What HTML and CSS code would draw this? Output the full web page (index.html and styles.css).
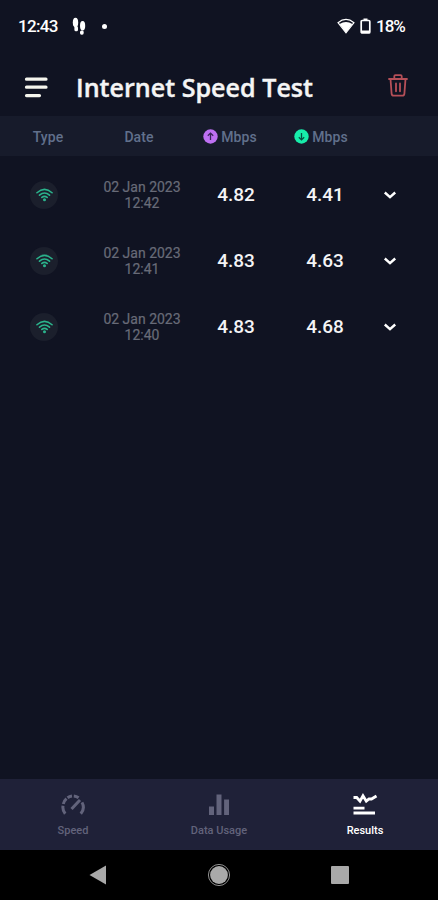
FILE: index.html
```html
<!DOCTYPE html>
<html lang="en">
<head>
    <meta charset="UTF-8">
    <meta name="viewport" content="width=device-width, initial-scale=1.0">
    <title>Internet Speed Test</title>
    <link rel="stylesheet" href="styles.css">
</head>
<body>
    <svg class="defs" width="0" height="0">
        <symbol id="wifi" viewBox="0 0 18 14">
            <path d="M1 4.6Q9-2.4 17 4.6M3.7 7.2Q9 2.6 14.3 7.2M6.2 9.6Q9 7.2 11.8 9.6" fill="none" stroke="currentColor" stroke-width="1.7" stroke-linecap="round"/>
            <circle cx="9" cy="12" r="1.6" fill="currentColor"/>
        </symbol>
        <symbol id="chevron" viewBox="0 0 14 10">
            <path d="M1.8 2.5L7 7.2L12.2 2.5" fill="none" stroke="currentColor" stroke-width="2.4"/>
        </symbol>
    </svg>

    <div class="status-bar">
        <span class="time">12:43</span>
        <svg class="steps" width="14" height="19" viewBox="0 0 14 19">
            <ellipse cx="3.5" cy="5.5" rx="2.7" ry="4.7"/>
            <rect x="2.4" y="9" width="3.6" height="5.3" rx="1.5"/>
            <ellipse cx="10.6" cy="8.7" rx="2.6" ry="4.7"/>
            <rect x="8" y="13.5" width="3.7" height="4.2" rx="1.6"/>
        </svg>
        <span class="dot"></span>
        <svg class="signal" width="18" height="16" viewBox="0 0 18 16">
            <path d="M1 4.7Q9-1.8 17 4.7L9 14.8Z" fill="none" stroke="#fff" stroke-width="1.2"/>
            <path d="M2.6 6Q9 2.2 15.4 6L9 14.8Z"/>
        </svg>
        <svg class="battery" width="11" height="16" viewBox="0 0 11 16">
            <path d="M3.5 0.5h4v2h-4z"/>
            <rect x="1.2" y="2.5" width="8.6" height="12.5" rx="1" fill="none" stroke="#fff" stroke-width="1.7"/>
            <path d="M1 12.5h9v2.5h-9z"/>
        </svg>
        <span class="percent">18%</span>
    </div>

    <header class="header">
        <svg class="menu" width="24" height="22" viewBox="0 0 24 22">
            <path d="M2.5 2.2h19.5M2.5 10.2h19.5M2.5 18.6h13" stroke="#f5f5ed" stroke-width="3.2" stroke-linecap="round"/>
        </svg>
        <svg class="title" width="244" height="36" viewBox="0 0 244 36">
            <text x="0" y="26" textLength="237" lengthAdjust="spacingAndGlyphs">Internet Speed Test</text>
        </svg>
        <svg class="trash" width="20" height="23" viewBox="0 0 20 23" fill="none" stroke="#b54f58" stroke-width="1.8" stroke-linejoin="round" stroke-linecap="round">
            <path d="M1 5h18M6.3 5V2.3Q6.3 1.2 7.4 1.2h5.2Q13.7 1.2 13.7 2.3V5M2.5 5L3.6 19.6Q3.8 21.7 5.8 21.7h8.4Q16.2 21.7 16.4 19.6L17.5 5M8 9.5v7.8M12 9.5v7.8"/>
        </svg>
    </header>

    <div class="grid table-head">
        <span class="col-type">Type</span>
        <span class="col-date">Date</span>
        <span class="unit">
            <svg width="15" height="15" viewBox="0 0 15 15"><circle cx="7.5" cy="7.5" r="7.2" fill="#be70f2"/><path d="M7.5 11V4.2M4.8 6.8L7.5 4.1L10.2 6.8" fill="none" stroke="#39245a" stroke-width="1.3"/></svg>
            Mbps
        </span>
        <span class="unit download">
            <svg width="15" height="15" viewBox="0 0 15 15"><circle cx="7.5" cy="7.5" r="7.2" fill="#17ecaa"/><path d="M7.5 4V10.8M4.8 8.2L7.5 10.9L10.2 8.2" fill="none" stroke="#084f43" stroke-width="1.3"/></svg>
            Mbps
        </span>
    </div>

    <main class="results">
        <div class="grid row">
            <span class="badge"><svg width="17" height="14"><use href="#wifi"/></svg></span>
            <span class="date">02 Jan 2023<br>12:42</span>
            <span class="speed">4.82</span>
            <span class="speed">4.41</span>
            <svg class="chevron" width="14" height="10"><use href="#chevron"/></svg>
        </div>
        <div class="grid row">
            <span class="badge"><svg width="17" height="14"><use href="#wifi"/></svg></span>
            <span class="date">02 Jan 2023<br>12:41</span>
            <span class="speed">4.83</span>
            <span class="speed">4.63</span>
            <svg class="chevron" width="14" height="10"><use href="#chevron"/></svg>
        </div>
        <div class="grid row">
            <span class="badge"><svg width="17" height="14"><use href="#wifi"/></svg></span>
            <span class="date">02 Jan 2023<br>12:40</span>
            <span class="speed">4.83</span>
            <span class="speed">4.68</span>
            <svg class="chevron" width="14" height="10"><use href="#chevron"/></svg>
        </div>
    </main>

    <nav class="tabs">
        <div class="tab">
            <svg width="26" height="24" viewBox="0 0 26 24" fill="none" stroke="currentColor" stroke-width="3">
                <path d="M5.2 20.7A10 10 0 0 1 3 12.8M3.3 11A10 10 0 0 1 6.5 5.7M7.5 4.8A10 10 0 0 1 12 3M13.8 3A10 10 0 0 1 18.6 4.8M22 9.4A10 10 0 0 1 20.8 20.7"/>
                <path d="M11.5 16L20 7"/>
            </svg>
            <span>Speed</span>
        </div>
        <div class="tab">
            <svg width="26" height="24" viewBox="0 0 26 24" fill="currentColor">
                <path d="M3 13.5h5v8.5H3zM10.5 1.5h5v20.5h-5zM18.1 6.5h4.9V22h-4.9z"/>
            </svg>
            <span>Data Usage</span>
        </div>
        <div class="tab active">
            <svg width="26" height="24" viewBox="0 0 26 24" fill="none" stroke="currentColor">
                <path d="M1.5 4.5h3.2L8 8.2L11 2.8L14.3 8.2L17 6H19.5L24.5 3" stroke-width="2.8"/>
                <path d="M1.5 15.2h11M1.5 20h21.5" stroke-width="2.8"/>
            </svg>
            <span>Results</span>
        </div>
    </nav>

    <div class="system-nav">
        <svg width="20" height="22" viewBox="0 0 20 22"><path d="M1.5 11L18 1.5v19z"/></svg>
        <svg width="24" height="24" viewBox="0 0 24 24"><circle cx="12" cy="12" r="8.9"/><circle cx="12" cy="12" r="10.6" fill="none" stroke="#8f8f8f" stroke-width="1"/></svg>
        <svg width="20" height="22" viewBox="0 0 20 22"><rect x="1" y="2" width="18" height="18" rx="1"/></svg>
    </div>
</body>
</html>
```
FILE: styles.css
```css
body {
    margin: 0;
    height: 900px;
    display: flex;
    flex-direction: column;
    background-color: #101322;
    color: #fff;
    font-family: Roboto, sans-serif;
    overflow: hidden;
}
svg {
    display: block;
    flex: none;
}
.defs {
    position: absolute;
}
.status-bar {
    display: flex;
    align-items: center;
    height: 52px;
    padding: 0 32px 0 18px;
    fill: #fff;
    font-size: 17px;
    font-weight: 500;
}
.time {
    width: 40px;
    letter-spacing: -0.7px;
}
.steps {
    margin-left: 14px;
}
.dot {
    width: 5px;
    height: 5px;
    margin-left: 16px;
    border-radius: 50%;
    background: #fff;
}
.signal {
    margin-left: auto;
}
.battery {
    margin: 0 5px;
}
.percent {
    width: 30px;
    letter-spacing: -1px;
}
.header {
    display: flex;
    align-items: center;
    height: 64px;
    padding: 3px 30px 0 24px;
    box-sizing: border-box;
}
.menu {
    margin-top: 4px;
}
.title {
    margin-left: 28px;
    margin-top: 7px;
}
.title text {
    fill: #f5f5f5;
    stroke: #f5f5f5;
    stroke-width: 0.4px;
    font-family: "Open Sans", sans-serif;
    font-size: 25px;
    font-weight: 600;
}
.trash {
    margin-left: auto;
    margin-bottom: 1px;
}
.grid {
    display: grid;
    grid-template-columns: 88px 108px 80px 98px 32px;
    align-items: center;
    justify-items: center;
}
.table-head {
    height: 40px;
    padding-top: 1px;
    box-sizing: border-box;
    background: #171b2b;
    color: #61708c;
    font-size: 14px;
    font-weight: 500;
    letter-spacing: 0.1px;
}
.col-type {
    padding-left: 8px;
}
.col-date {
    padding-right: 6px;
}
.unit {
    display: flex;
    gap: 3px;
    align-items: center;
    margin-left: -12px;
}
.download {
    margin-left: -8px;
}
.results {
    flex: 1;
    padding-top: 6px;
}
.row {
    height: 66px;
}
.badge {
    display: grid;
    place-items: center;
    width: 28px;
    height: 28px;
    border-radius: 50%;
    background: #1b1f2c;
    color: #2bb38c;
}
.date {
    color: #686b78;
    font-size: 14px;
    line-height: 16px;
    text-align: center;
    white-space: nowrap;
    -webkit-text-stroke: 0.2px;
}
.speed {
    margin-top: -1px;
    color: #f4f4f6;
    font-size: 19px;
    font-weight: 500;
}
.chevron {
    margin-top: -1px;
}
.tabs {
    display: grid;
    grid-template-columns: repeat(3, 1fr);
    height: 71px;
    background: #1f2138;
}
.tab {
    display: flex;
    flex-direction: column;
    align-items: center;
    padding-top: 14px;
    color: #62637b;
    font-size: 11px;
    font-weight: 500;
}
.tab span {
    margin-top: 7px;
    line-height: 13px;
}
.active {
    color: #fff;
}
.system-nav {
    display: flex;
    align-items: center;
    justify-content: space-between;
    height: 50px;
    padding: 0 88px;
    background: #000;
    fill: #a9a9a9;
}
```
